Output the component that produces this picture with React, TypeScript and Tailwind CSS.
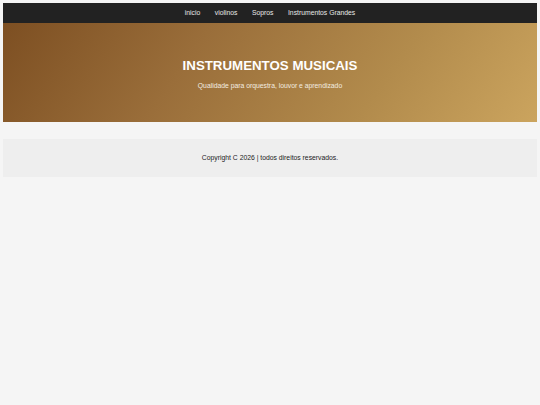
export default function App() {
  const links = ["inicio", "violinos", "Sopros", "Instrumentos Grandes"];
  return (
    <div className="min-h-[405px] bg-[#f5f5f5] p-[3px] font-['Liberation_Sans',Arial,sans-serif]">
      <nav className="flex h-[20px] items-center justify-center gap-[14.5px] bg-[#222222] text-[6.8px] text-[#e8e8e8]">
        {links.map((l) => (
          <a key={l} href="#" className="leading-none">
            {l}
          </a>
        ))}
      </nav>
      <header className="flex h-[99px] flex-col items-center justify-center bg-[linear-gradient(125deg,#7d4f22_0%,#9a6e3a_35%,#b28b4c_70%,#cba45e_100%)] pt-[4px] text-white">
        <h1 className="text-[13.3px] font-bold leading-none">INSTRUMENTOS MUSICAIS</h1>
        <p className="mt-[10px] text-[6.8px] leading-none text-[#f3ece0]">
          Qualidade para orquestra, louvor e aprendizado
        </p>
      </header>
      <footer className="mt-[17px] flex h-[38px] items-center justify-center bg-[#eeeeee] text-[6.8px] text-[#222222]">
        Copyright C 2026 | todos direitos reservados.
      </footer>
    </div>
  );
}
